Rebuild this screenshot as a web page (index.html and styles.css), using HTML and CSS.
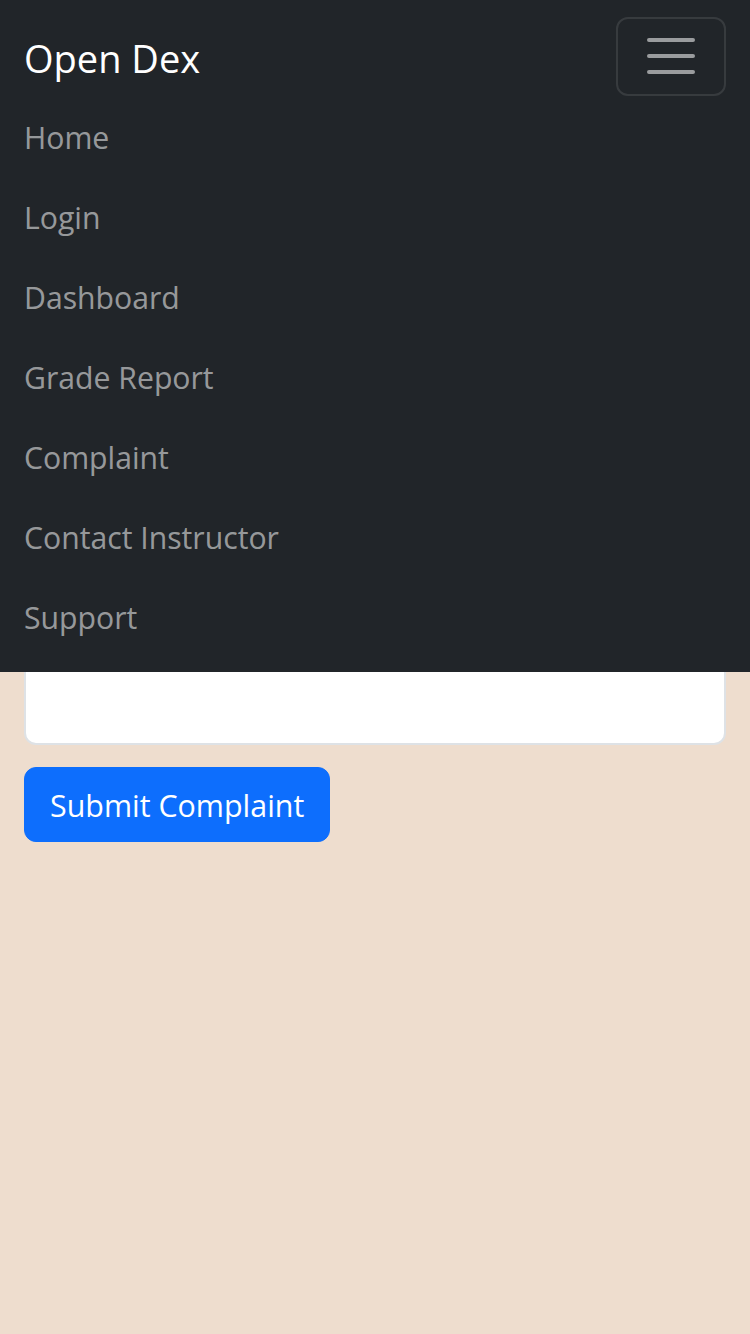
FILE: index.html
```html
<!DOCTYPE html>
<html lang="en">
<head>
<meta charset="utf-8">
<title>Open Dex - Complaint</title>
<link rel="stylesheet" href="styles.css">
</head>
<body>
<nav class="navbar">
  <div class="navbar-top">
    <a class="brand" href="#">Open Dex</a>
    <button class="toggler" type="button" aria-label="Toggle navigation">
      <svg class="toggler-icon" viewBox="0 0 30 30" width="60" height="60"><path d="M4 7h22M4 15h22M4 23h22" stroke="rgba(255,255,255,0.55)" stroke-width="2" stroke-linecap="round" stroke-miterlimit="10" fill="none"/></svg>
    </button>
  </div>
  <ul class="nav-list">
    <li><a class="nav-link" href="#">Home</a></li>
    <li><a class="nav-link" href="#">Login</a></li>
    <li><a class="nav-link" href="#">Dashboard</a></li>
    <li><a class="nav-link" href="#">Grade Report</a></li>
    <li><a class="nav-link" href="#">Complaint</a></li>
    <li><a class="nav-link" href="#">Contact Instructor</a></li>
    <li><a class="nav-link" href="#">Support</a></li>
  </ul>
</nav>
<main class="content">
  <form class="complaint-form">
    <textarea id="complaint" class="textarea" aria-label="Complaint"></textarea>
    <button class="btn-primary" type="submit">Submit Complaint</button>
  </form>
</main>
</body>
</html>
```
FILE: styles.css
```css
html, body {
  margin: 0;
  padding: 0;
}
body {
  background: #eeddce;
  font-family: "Open Sans", "Noto Sans", sans-serif;
  font-size: 30px;
  line-height: 1.5;
  color: #212529;
  min-height: 1334px;
}
.navbar {
  position: fixed;
  top: 0;
  left: 0;
  right: 0;
  z-index: 10;
  background: #212529;
  padding: 16px 24px;
  box-sizing: border-box;
}
.navbar-top {
  display: flex;
  justify-content: space-between;
  align-items: center;
}
.brand {
  color: #fff;
  text-decoration: none;
  font-size: 38px;
  line-height: 60px;
  padding: 12px 0 8px;
}
.toggler {
  background: transparent;
  border: 2px solid rgba(255,255,255,0.1);
  border-radius: 12px;
  padding: 8px 23px;
  display: flex;
  align-items: center;
  justify-content: center;
  cursor: pointer;
  height: 79px;
  box-sizing: border-box;
}
.toggler-icon {
  display: block;
}
.nav-list {
  list-style: none;
  margin: 0;
  padding: 0;
  display: flex;
  flex-direction: column;
}
.nav-link {
  display: block;
  color: rgba(255,255,255,0.55);
  text-decoration: none;
  padding: 18px 0 14px;
  line-height: 48px;
  font-size: 30.2px;
}
.content {
  padding: 520px 24px 0;
}
.complaint-form {
  display: flex;
  flex-direction: column;
  align-items: flex-start;
}
.textarea {
  display: block;
  width: 100%;
  box-sizing: border-box;
  height: 225px;
  background: #fff;
  border: 2px solid #dee2e6;
  border-radius: 12px;
  margin: 0 0 22px;
  resize: none;
  font: inherit;
}
.btn-primary {
  background: #0d6efd;
  color: #fff;
  border: 1px solid #0d6efd;
  border-radius: 12px;
  font: inherit;
  font-size: 30.4px;
  line-height: 48px;
  padding: 14px 25px 11px;
  cursor: pointer;
}
```
